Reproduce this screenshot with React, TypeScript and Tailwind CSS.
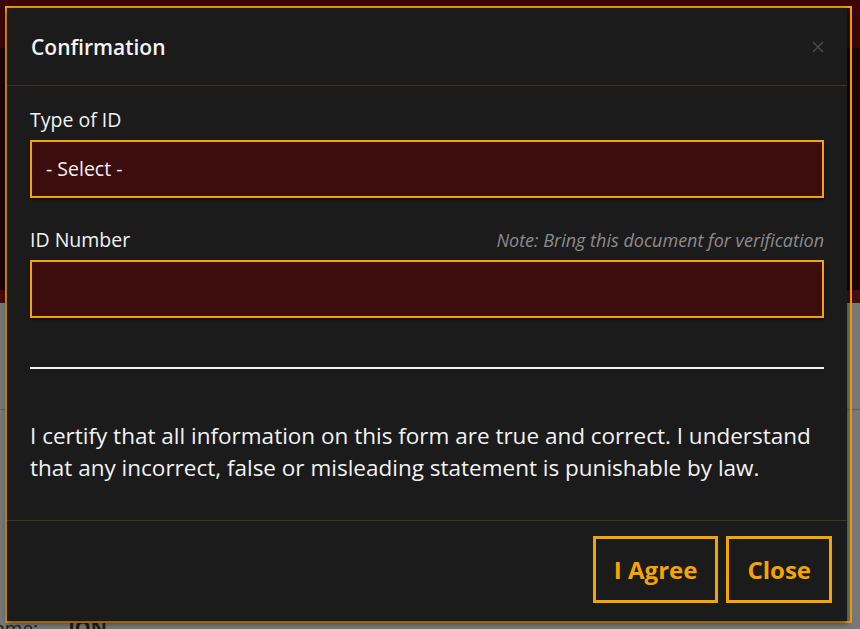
import React from "react";

// Confirmation modal shown over the registration page.

function CloseIcon() {
  return (
    <svg viewBox="0 0 12 12" className="h-[12px] w-[12px]" fill="none" aria-hidden>
      <path d="M1 1l10 10M11 1L1 11" stroke="#474747" strokeWidth="1.6" />
    </svg>
  );
}

function Field({ label, note, value }: { label: string; note?: string; value?: string }) {
  return (
    <div className="flex flex-col">
      <div className="mb-[7px] flex items-end justify-between">
        <span className="text-[19.5px] leading-[26px] text-[#f2f2f2]">{label}</span>
        {note && (
          <span className="text-[18px] italic leading-[26px] text-[#8c8c8c]">{note}</span>
        )}
      </div>
      <div className="flex h-[58px] items-center border-2 border-[#f7a400] bg-[#3d0c0c] px-[14px] text-[19.5px] text-[#f2f2f2] shadow-[0_1px_2px_rgba(0,0,0,0.8)]">
        {value}
      </div>
    </div>
  );
}

export default function App() {
  return (
    <div
      className="relative h-[629px] w-[860px] overflow-hidden bg-[#787878]"
      style={{ fontFamily: '"Open Sans", "Noto Sans", sans-serif' }}
    >
      {/* page behind the backdrop */}
      <div className="h-[48px] bg-[#3c0606]" />
      <div className="h-[242px] bg-[#1d0303]" />
      <div className="h-[13px] bg-[#470b0b]" />
      <div className="h-[107px] border-b border-[#5e5e5e]" />
      <div className="flex items-baseline gap-[30px] pl-0 pt-[203px] text-[#1c1c1c]">
        <span className="-ml-[20px] text-[19px]">Name:</span>
        <span className="text-[20px] font-bold">JON</span>
      </div>

      {/* modal */}
      <div className="absolute left-[5px] top-[6px] h-[617px] w-[847px] border-2 border-[#f7a400]">
        <div className="mb-[2px] mr-[3px] flex h-[613px] flex-col bg-[#1b1b1b] shadow-[0_2px_6px_rgba(0,0,0,0.6)]">
          <div className="flex h-[78px] items-center justify-between border-b border-[#3d3424] pl-[24px] pr-[23px]">
            <h2 className="pt-[2px] text-[21px] font-semibold text-[#f4f4f4]">Confirmation</h2>
            <CloseIcon />
          </div>

          <div className="flex flex-col px-[23px] pb-[36px] pt-[21px]">
            <Field label="Type of ID" value="- Select -" />
            <div className="mt-[29px]">
              <Field label="ID Number" note="Note: Bring this document for verification" />
            </div>
            <div className="mt-[49px] h-[2px] bg-[#f2f2f2]" />
            <p className="mt-[51px] text-[22.5px] leading-[32px] text-[#f2f2f2]">
              I certify that all information on this form are true and correct. I understand that
              any incorrect, false or misleading statement is punishable by law.
            </p>
          </div>

          <div className="flex justify-end gap-[8px] border-t border-[#3d3424] pr-[15px] pt-[15px]">
            <button className="h-[67px] border-[3px] border-[#f7a400] px-[18px] text-[24px] font-bold text-[#f7a400]">
              I Agree
            </button>
            <button className="h-[67px] border-[3px] border-[#f7a400] px-[18px] text-[24px] font-bold text-[#f7a400]">
              Close
            </button>
          </div>
        </div>
      </div>
    </div>
  );
}
